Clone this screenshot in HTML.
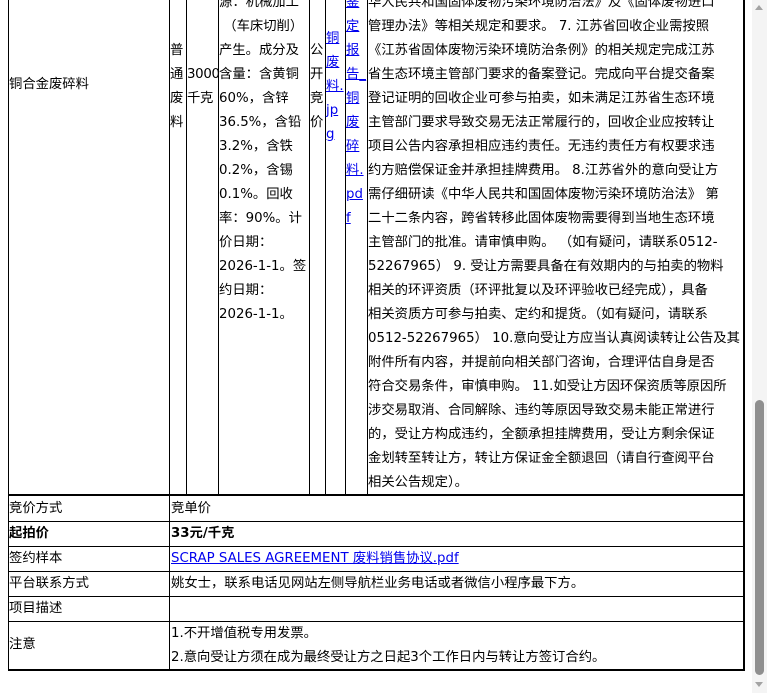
<!DOCTYPE html>
<html><head><meta charset="utf-8">
<style>
html,body{margin:0;padding:0;width:767px;height:693px;overflow:hidden;background:#fff;}
body{position:relative;font-family:"DejaVu Sans","Noto Sans CJK SC",sans-serif;font-size:13.33px;color:#000;}
.v{position:absolute;top:0;width:1px;background:#000;}
.h{position:absolute;left:8px;height:1px;background:#000;}
.t{position:absolute;white-space:nowrap;line-height:24px;}
a{color:#00e;text-decoration:underline;}
.b{font-weight:bold;}
</style></head><body>
<div class="v" style="left:8px;height:670px"></div>
<div class="v" style="left:169px;height:670px"></div>
<div class="v" style="left:186px;height:495px"></div>
<div class="v" style="left:218px;height:495px"></div>
<div class="v" style="left:309px;height:495px"></div>
<div class="v" style="left:325px;height:495px"></div>
<div class="v" style="left:345px;height:495px"></div>
<div class="v" style="left:367px;height:495px"></div>
<div class="v" style="left:743px;height:671px;width:2px"></div>
<div class="h" style="top:494px;width:737px;height:2px"></div>
<div class="h" style="top:521px;width:736px"></div>
<div class="h" style="top:546px;width:736px"></div>
<div class="h" style="top:571px;width:736px"></div>
<div class="h" style="top:596px;width:736px"></div>
<div class="h" style="top:621px;width:736px"></div>
<div class="h" style="top:669px;width:737px;height:2px"></div>

<div class="t" style="left:9px;top:73px">铜合金废碎料</div>
<div class="t" style="left:170px;top:39px">普<br>通<br>废<br>料</div>
<div class="t" style="left:187px;top:63px;letter-spacing:-0.3px">3000<br>千克</div>
<div class="t" style="left:219px;top:-9px">源：机械加工<br>&nbsp;（车床切削）<br>产生。成分及<br>含量：含黄铜<br>60%，含锌<br>36.5%，含铅<br>3.2%，含铁<br>0.2%，含锡<br>0.1%。回收<br>率：90%。计<br>价日期：<br>2026-1-1。签<br>约日期：<br>2026-1-1。</div>
<div class="t" style="left:310px;top:39px">公<br>开<br>竞<br>价</div>
<div class="t" style="left:326px;top:27px"><a>铜<br>废<br>料.<br>jp<br>g</a></div>
<div class="t" style="left:346px;top:-9px"><a>鉴<br>定<br>报<br>告_<br>铜<br>废<br>碎<br>料.<br>pd<br>f</a></div>
<div class="t" style="left:368px;top:-9px">华人民共和国固体废物污染环境防治法》及《固体废物进口<br>管理办法》等相关规定和要求。 7. 江苏省回收企业需按照<br>《江苏省固体废物污染环境防治条例》的相关规定完成江苏<br>省生态环境主管部门要求的备案登记。完成向平台提交备案<br>登记证明的回收企业可参与拍卖，如未满足江苏省生态环境<br>主管部门要求导致交易无法正常履行的，回收企业应按转让<br>项目公告内容承担相应违约责任。无违约责任方有权要求违<br>约方赔偿保证金并承担挂牌费用。 8.江苏省外的意向受让方<br>需仔细研读《中华人民共和国固体废物污染环境防治法》 第<br>二十二条内容，跨省转移此固体废物需要得到当地生态环境<br>主管部门的批准。请审慎申购。 （如有疑问，请联系0512-<br>52267965） 9. 受让方需要具备在有效期内的与拍卖的物料<br>相关的环评资质（环评批复以及环评验收已经完成），具备<br>相关资质方可参与拍卖、定约和提货。（如有疑问，请联系<br>0512-52267965） 10.意向受让方应当认真阅读转让公告及其<br>附件所有内容，并提前向相关部门咨询，合理评估自身是否<br>符合交易条件，审慎申购。 11.如受让方因环保资质等原因所<br>涉交易取消、合同解除、违约等原因导致交易未能正常进行<br>的，受让方构成违约，全额承担挂牌费用，受让方剩余保证<br>金划转至转让方，转让方保证金全额退回（请自行查阅平台<br>相关公告规定）。</div>

<div class="t" style="left:9px;top:497px">竞价方式</div>
<div class="t" style="left:171px;top:497px">竞单价</div>
<div class="t b" style="left:9px;top:522px">起拍价</div>
<div class="t b" style="left:171px;top:522px">33元/千克</div>
<div class="t" style="left:9px;top:547px">签约样本</div>
<div class="t" style="left:171px;top:547px"><a>SCRAP SALES AGREEMENT 废料销售协议.pdf</a></div>
<div class="t" style="left:9px;top:572px">平台联系方式</div>
<div class="t" style="left:171px;top:572px">姚女士，联系电话见网站左侧导航栏业务电话或者微信小程序最下方。</div>
<div class="t" style="left:9px;top:597px">项目描述</div>
<div class="t" style="left:9px;top:633px">注意</div>
<div class="t" style="left:171px;top:622px">1.不开增值税专用发票。</div>
<div class="t" style="left:171px;top:646px">2.意向受让方须在成为最终受让方之日起3个工作日内与转让方签订合约。</div>

<div style="position:absolute;left:752px;top:0;width:15px;height:693px;background:#f4f4f4"></div>
<div style="position:absolute;left:755px;top:400px;width:9px;height:275px;background:#8f8f8f;border-radius:5px"></div>
<div style="position:absolute;left:755px;top:5px;width:0;height:0;border-left:4px solid transparent;border-right:4px solid transparent;border-bottom:5px solid #a3a3a3"></div>
<div style="position:absolute;left:755px;top:682px;width:0;height:0;border-left:4px solid transparent;border-right:4px solid transparent;border-top:5px solid #a3a3a3"></div>
</body></html>
